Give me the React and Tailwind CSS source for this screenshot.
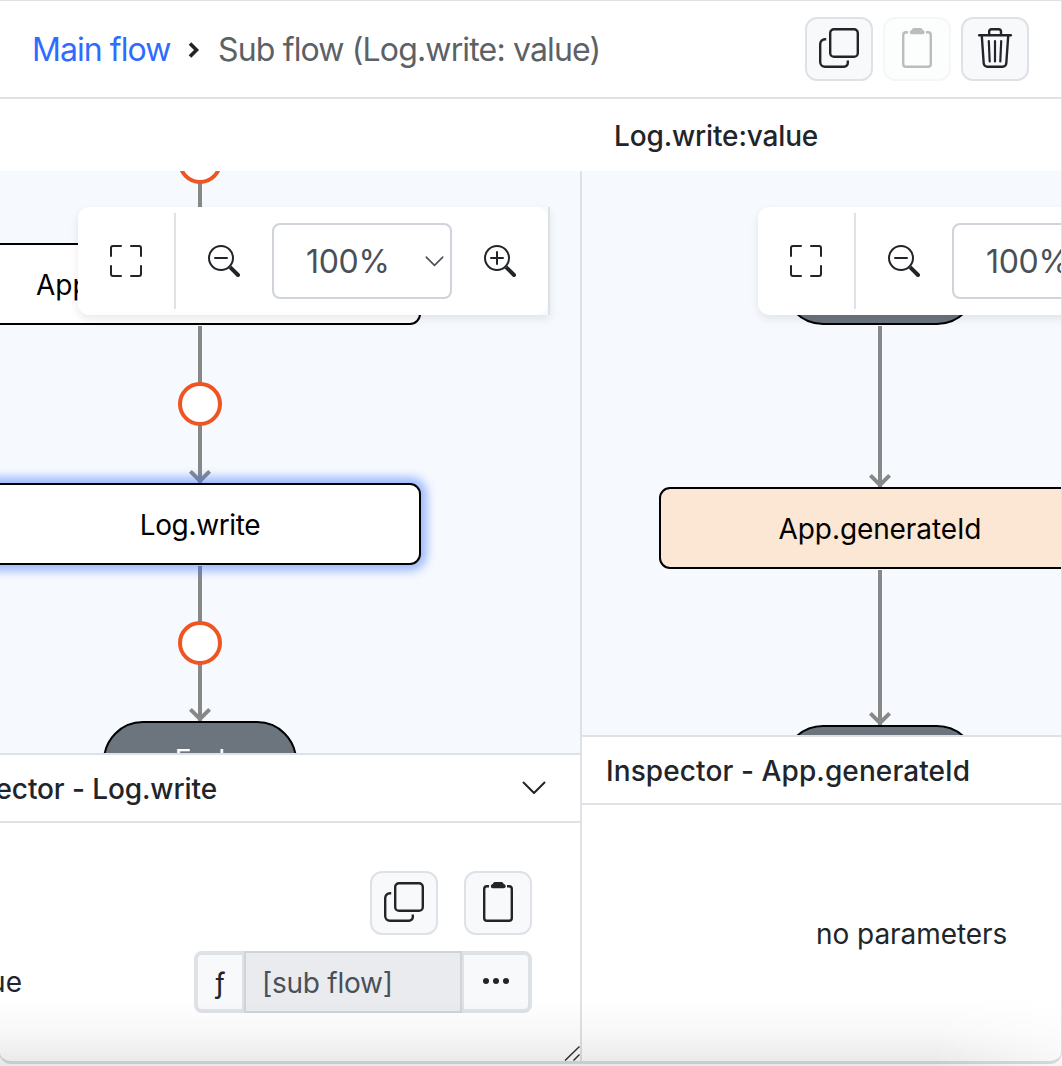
import { BsFullscreen, BsZoomIn, BsZoomOut } from 'react-icons/bs';

function CopyIcon() {
  return (
    <svg viewBox="0 0 40 40" className="size-10" fill="none" stroke="currentColor" strokeWidth="2.4">
      <rect x="11.2" y="1.2" width="27.6" height="27.6" rx="3.8" />
      <path d="M7.2 11.2H6a4.8 4.8 0 0 0-4.8 4.8v18a4.8 4.8 0 0 0 4.8 4.8h19a3.8 3.8 0 0 0 3.8-3.8v-2.6" />
    </svg>
  );
}

function ClipboardIcon() {
  return (
    <svg viewBox="0 0 40 40" className="size-10" fill="none" stroke="currentColor" strokeWidth="2.4">
      <path d="M11 4.2H9a2.8 2.8 0 0 0-2.8 2.8v29A2.8 2.8 0 0 0 9 38.8h22a2.8 2.8 0 0 0 2.8-2.8V7A2.8 2.8 0 0 0 31 4.2H29" />
      <path
        stroke="none"
        fill="currentColor"
        d="M17 0h6.5a2 2 0 0 1 1.7 1l.5 1c1.3.4 2 1.2 2 2.300 0 1.200-.8 1.900-2 1.900H14.800c-1.200 0-2-.7-2-1.900 0-1.100.7-1.900 2-2.300l.5-1A2 2 0 0 1 17 0Z"
      />
    </svg>
  );
}

function TrashIcon() {
  return (
    <svg viewBox="0 0 40 40" className="size-10" fill="none" stroke="currentColor" strokeWidth="2.4" strokeLinecap="round">
      <path d="M4.2 7.3h31.600" />
      <path d="M14.2 7V3.600a2.400 2.400 0 0 1 2.400-2.400h7a2.400 2.400 0 0 1 2.400 2.400V7" />
      <path d="M6.800 8l1.900 27.200a3.700 3.700 0 0 0 3.700 3.600h15.200a3.700 3.700 0 0 0 3.700-3.600L33.200 8" />
      <path d="M13.800 13l.9 20.500M20 13v20.500M26.200 13l-.9 20.500" strokeWidth="2.200" />
    </svg>
  );
}

function Chevron({ className }) {
  return (
    <svg viewBox="0 0 24 14" className={className} fill="none" stroke="currentColor" strokeWidth="2" strokeLinecap="round" strokeLinejoin="round">
      <path d="M1.500 1.500 12 12 22.500 1.500" />
    </svg>
  );
}

function IconButton({ label, disabled, children }) {
  return (
    <button
      aria-label={label}
      disabled={disabled}
      className="flex h-16 w-[68px] items-start justify-center rounded-xl border-2 border-[#dee2e6] bg-[#f8f9fa] pt-[9px] text-[#212529] disabled:opacity-30"
    >
      {children}
    </button>
  );
}

function Toolbar() {
  return (
    <div className="absolute top-9 flex h-[108px] w-[472px] items-center rounded-l-xl shadow-[0_4px_10px_rgba(0,0,0,0.09)]">
      <div className="flex h-full w-[470px] shrink-0 items-center rounded-xl bg-white text-[#212529]">
        <button className="flex h-24 w-[98px] items-center justify-center border-r-2 border-[#dee2e6]" aria-label="Fit">
          <BsFullscreen size={32} />
        </button>
        <button className="flex w-24 justify-center" aria-label="Zoom out">
          <BsZoomOut size={32} />
        </button>
        <div className="flex h-[76px] w-[180px] items-center justify-between rounded-lg border-2 border-[#ced4da] pr-[6px] pl-8 text-[#495057]">
          <span className="pt-[2px] text-[32px] tracking-[-0.3px]">100%</span>
          <Chevron className="h-[11px] w-[19px]" />
        </div>
        <button className="flex w-24 justify-center" aria-label="Zoom in">
          <BsZoomIn size={32} />
        </button>
      </div>
      <div className="h-full w-[2px] bg-[#dee2e6]" />
    </div>
  );
}

function Arrow({ className }) {
  return (
    <div className={`absolute w-[22px] ${className}`}>
      <div className="mx-auto h-full w-1 bg-[#888]" />
      <svg viewBox="0 0 22 14" className="absolute bottom-0 h-[14px] w-[22px]" fill="none" stroke="#888" strokeWidth="4">
        <path d="M1.400 1.400 11 11 20.600 1.400" />
      </svg>
    </div>
  );
}

function Dot({ className }) {
  return <div className={`absolute size-11 rounded-full border-4 border-[#ee5522] bg-white ${className}`} />;
}

function Node({ className, children }) {
  return (
    <div className={`absolute flex h-[82px] w-[442px] items-center rounded-[11px] border-2 border-black text-[28px] text-black ${className}`}>
      {children}
    </div>
  );
}

function Terminal({ className, children }) {
  return (
    <div className={`absolute flex h-[82px] w-[194px] items-center justify-center rounded-[40px] border-2 border-black bg-[#6c757d] pb-1 text-[28px] text-white ${className}`}>
      {children}
    </div>
  );
}

function MainPanel() {
  return (
    <section className="flex w-[581px] shrink-0 flex-col">
      <div className="relative h-[582px] shrink-0 overflow-hidden bg-[#f6f9fe]">
        <div className="absolute top-0 left-[199px] h-9 w-1 bg-[#888]" />
        <Dot className="top-[-31px] left-[179px]" />
        <Node className="top-[72px] left-[-20px] bg-white pt-[2px] pl-[55px]">App</Node>
        <Arrow className="top-[155px] left-[190px] h-[158px]" />
        <Arrow className="top-[395px] left-[190px] h-[156px]" />
        <Node className="top-[312px] left-[-20px] justify-center bg-white pt-px tracking-[-0.35px] shadow-[0_0_10px_6px_rgba(51,109,255,0.45)]">Log.write</Node>
        <Dot className="top-[211px] left-[179px]" />
        <Dot className="top-[450px] left-[179px]" />
        <Terminal className="top-[550px] left-[104px]">End</Terminal>
        <div className="flex pl-[79px]"><Toolbar /></div>
      </div>
      <header className="flex h-[70px] shrink-0 items-center border-y-2 border-[#dee2e6] pr-[34px] text-[28px] font-medium">
        <h2 className="flex w-[218px] justify-end overflow-hidden pt-px whitespace-nowrap tracking-[-0.1px]">Inspector - Log.write</h2>
        <Chevron className="ml-auto h-[14px] w-6" />
      </header>
      <div className="flex grow flex-col gap-4 pt-12 pr-12">
        <div className="flex justify-end gap-[26px]">
          <IconButton label="Copy"><CopyIcon /></IconButton>
          <IconButton label="Paste"><ClipboardIcon /></IconButton>
        </div>
        <div className="flex items-center justify-between text-[28px]">
          <span className="flex w-[23px] justify-end overflow-hidden">value</span>
          <div className="flex h-[62px] w-[338px]">
            <button className="flex w-[50px] items-center justify-center rounded-l-lg border-4 border-r-2 border-[#dee2e6] bg-[#f8f9fa] pt-px">ƒ</button>
            <div className="flex w-[218px] items-center border-2 border-[#ced4da] bg-[#e9ebef] pt-px pl-4 tracking-[-0.25px] text-[#495057]">[sub flow]</div>
            <button className="flex grow items-center justify-center gap-1 rounded-r-lg border-4 border-l-2 border-[#dee2e6] bg-[#f8f9fa] pb-[2px]" aria-label="More">
              <i className="size-[6px] rounded-full bg-[#212529]" />
              <i className="size-[6px] rounded-full bg-[#212529]" />
              <i className="size-[6px] rounded-full bg-[#212529]" />
            </button>
          </div>
        </div>
        <svg viewBox="0 0 16 16" className="mt-auto -mr-12 size-4 self-end" fill="none" stroke="#333" strokeWidth="1.500">
          <path d="M1 15.500 15.500 1.500M9.500 15.500 15.500 9.500" />
        </svg>
      </div>
    </section>
  );
}

function SubPanel() {
  return (
    <section className="flex grow flex-col overflow-hidden border-l-2 border-[#dee2e6]">
      <div className="relative h-[564px] shrink-0 overflow-hidden bg-[#f6f9fe]">
        <Terminal className="top-[72px] left-[201px]" />
        <Arrow className="top-[155px] left-[287px] h-[162px]" />
        <Node className="top-[316px] left-[77px] justify-center bg-[#fce6d4] pt-px tracking-[-0.1px]">App.generateId</Node>
        <Arrow className="top-[399px] left-[287px] h-[156px]" />
        <Terminal className="top-[554px] left-[201px]" />
        <div className="flex pl-[176px]"><Toolbar /></div>
      </div>
      <header className="flex h-[70px] shrink-0 items-center border-y-2 border-[#dee2e6] pt-px pl-6 text-[28px] font-medium whitespace-nowrap tracking-[0.1px]">
        Inspector - App.generateId
      </header>
      <p className="pt-[108px] pl-[234px] text-[28px] tracking-[-0.05px]">no parameters</p>
    </section>
  );
}

export default function App() {
  return (
    <main className="relative h-[1066px] w-[1062px] overflow-hidden bg-white font-['Inter',sans-serif] text-[#212529]">
      <div className="-ml-px h-[1064px] w-[1063px] overflow-hidden rounded-b-xl border-t border-r border-b-[3px] border-l border-[#dee2e6] border-b-[#dcdfe2]">
        <div className="-ml-px flex h-[1060px] w-[1062px] flex-col">
          <nav className="flex h-[98px] shrink-0 items-center justify-between border-b-2 border-[#dee2e6] pr-8 pl-[33px] text-[32px]">
            <div className="flex items-center pt-[2px]">
              <a className="w-[156px] tracking-[-0.95px] text-[#2f6bff]">Main flow</a>
              <svg viewBox="0 0 12 16" className="mr-[18px] h-4 w-3" fill="none" stroke="#212529" strokeWidth="3.600">
                <path d="M2 1.500 8.500 8 2 14.500" />
              </svg>
              <span className="tracking-[-0.85px] text-[#5c6166]">Sub flow (Log.write: value)</span>
            </div>
            <div className="flex gap-[10px]">
              <IconButton label="Copy"><CopyIcon /></IconButton>
              <IconButton label="Paste" disabled><ClipboardIcon /></IconButton>
              <IconButton label="Delete"><TrashIcon /></IconButton>
            </div>
          </nav>
          <h1 className="flex h-[72px] shrink-0 items-center pt-[2px] pl-[615px] text-[28px] font-medium tracking-[-0.15px]">Log.write:value</h1>
          <div className="flex min-h-0 grow">
            <MainPanel />
            <SubPanel />
          </div>
        </div>
      </div>
      <div className="pointer-events-none absolute inset-x-0 bottom-0 h-[66px] bg-linear-to-b from-transparent via-black/3 to-black/9 [mask-image:linear-gradient(to_right,black_88%,rgba(0,0,0,0.35))]" />
    </main>
  );
}
